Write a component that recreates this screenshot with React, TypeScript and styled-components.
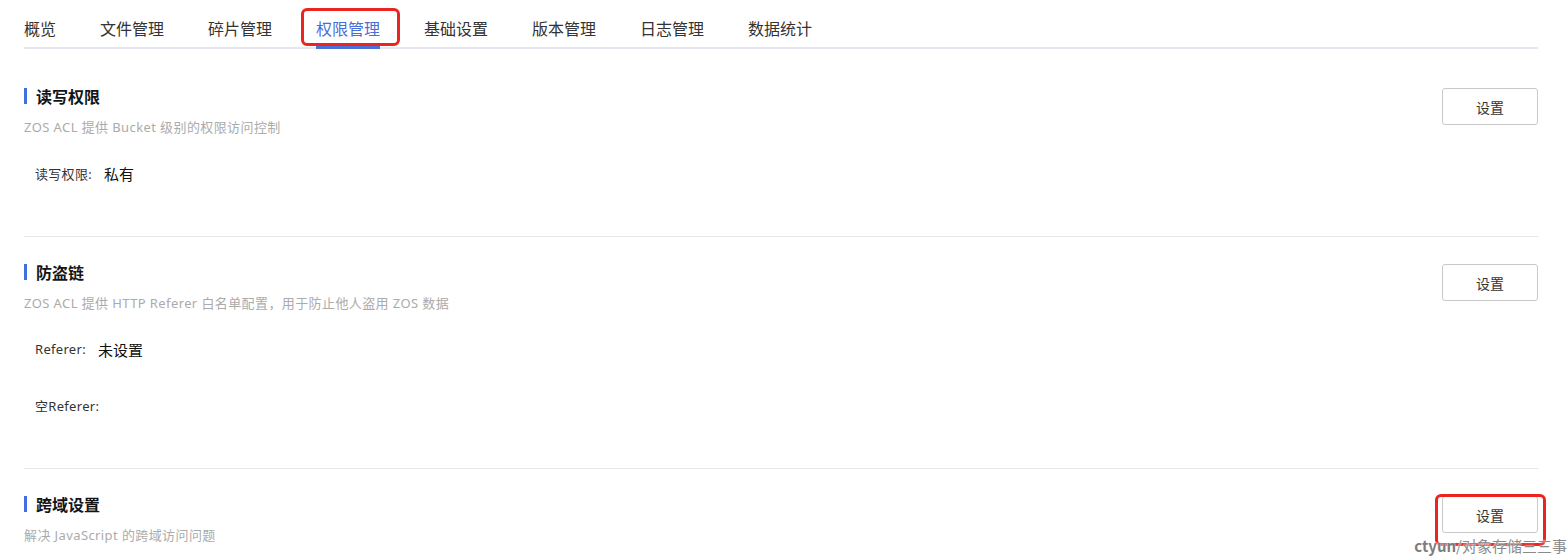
import React from "react";
import styled, { createGlobalStyle } from "styled-components";

const GlobalStyle = createGlobalStyle`
  html, body {
    margin: 0;
    padding: 0;
    background: #ffffff;
    font-family: "Noto Sans", "Noto Sans CJK SC", sans-serif;
    color: #333;
  }
  * { box-sizing: border-box; }
`;

const Page = styled.div`
  position: relative;
  padding: 0 29px 0 24px;
  height: 556px;
  overflow: hidden;
`;

const TabBar = styled.nav`
  display: flex;
  gap: 44px;
  border-bottom: 2px solid #e6e6f1;
`;

const Tab = styled.div<{ $active?: boolean }>`
  position: relative;
  font-family: "Noto Sans CJK SC", sans-serif;
  font-size: 16px;
  line-height: 22px;
  padding: 17px 0 8px;
  color: ${(p) => (p.$active ? "#4a6ed8" : "#333")};
  white-space: nowrap;
  ${(p) =>
    p.$active &&
    `
    &::after {
      content: "";
      position: absolute;
      left: 0;
      right: 0;
      bottom: -2px;
      height: 3px;
      background: #4a6fd6;
    }
  `}
`;

const Highlight = styled.span<{ $l: number; $r: number; $t: number; $b: number }>`
  position: absolute;
  left: ${(p) => p.$l}px;
  right: ${(p) => p.$r}px;
  top: ${(p) => p.$t}px;
  bottom: ${(p) => p.$b}px;
  border: 3px solid #ec2420;
  border-radius: 6px;
  pointer-events: none;
`;

const Section = styled.section<{ $first?: boolean; $last?: boolean }>`
  padding: ${(p) => (p.$first ? "39px" : "27px")} 0 ${(p) => (p.$last ? "0" : "52px")};
  border-bottom: ${(p) => (p.$last ? "none" : "1px solid #e6e6e6")};
`;

const Header = styled.div`
  display: flex;
  justify-content: space-between;
  align-items: flex-start;
`;

const HeadText = styled.div`
  display: flex;
  flex-direction: column;
  margin-top: -1px;
`;

const Title = styled.h3`
  display: flex;
  align-items: center;
  margin: 0;
  font-family: "Noto Sans CJK SC", sans-serif;
  font-size: 16px;
  line-height: 18px;
  font-weight: 700;
  color: #141414;
`;

const Bar = styled.span`
  width: 3px;
  height: 16px;
  background: #416ee0;
  margin-right: 9px;
`;

const Desc = styled.p`
  margin: 12px 0 0;
  font-size: 13px;
  line-height: 20px;
  letter-spacing: 0.4px;
  color: #ababab;
`;

const ButtonWrap = styled.div`
  position: relative;
`;

const Button = styled.button`
  width: 96px;
  height: 37px;
  border: 1px solid #c9c9c9;
  border-radius: 3px;
  background: #fff;
  font-family: "Noto Sans CJK SC", sans-serif;
  font-size: 14px;
  color: #333;
  cursor: pointer;
`;

const Fields = styled.div`
  display: flex;
  flex-direction: column;
  gap: 34px;
  margin-top: 25px;
  padding-left: 11px;
`;

const Field = styled.div`
  display: flex;
  align-items: center;
  height: 22px;
`;

const Label = styled.span`
  font-size: 13px;
  letter-spacing: 0.3px;
  color: #333;
  margin-right: 12px;
`;

const Value = styled.span`
  font-family: "Noto Sans CJK SC", sans-serif;
  font-size: 15px;
  color: #111;
`;

const Watermark = styled.div`
  position: absolute;
  right: 0;
  bottom: 1px;
  font-family: "Noto Sans CJK SC", sans-serif;
  font-size: 15px;
  line-height: 18px;
  color: #8a8a8a;
  white-space: nowrap;
  text-shadow: 0 0 2px #fff, 0 0 2px #fff;
`;

const WmLatin = styled.span`
  font-weight: 700;
  color: #7d7d7d;
`;

const tabs = ["概览", "文件管理", "碎片管理", "权限管理", "基础设置", "版本管理", "日志管理", "数据统计"];

type SectionData = {
  title: string;
  desc: string;
  fields: { label: string; value: string }[];
};

const sections: SectionData[] = [
  {
    title: "读写权限",
    desc: "ZOS ACL 提供 Bucket 级别的权限访问控制",
    fields: [{ label: "读写权限:", value: "私有" }],
  },
  {
    title: "防盗链",
    desc: "ZOS ACL 提供 HTTP Referer 白名单配置，用于防止他人盗用 ZOS 数据",
    fields: [
      { label: "Referer:", value: "未设置" },
      { label: "空Referer:", value: "" },
    ],
  },
  {
    title: "跨域设置",
    desc: "解决 JavaScript 的跨域访问问题",
    fields: [],
  },
];

export default function App() {
  return (
    <>
      <GlobalStyle />
      <Page>
        <TabBar>
          {tabs.map((t) => (
            <Tab key={t} $active={t === "权限管理"}>
              {t}
              {t === "权限管理" && <Highlight $l={-15} $r={-20} $t={8} $b={1} />}
            </Tab>
          ))}
        </TabBar>
        {sections.map((s, i) => (
          <Section key={s.title} $first={i === 0} $last={i === sections.length - 1}>
            <Header>
              <HeadText>
                <Title>
                  <Bar />
                  {s.title}
                </Title>
                <Desc>{s.desc}</Desc>
              </HeadText>
              <ButtonWrap>
                <Button>设置</Button>
                {i === sections.length - 1 && <Highlight $l={-7} $r={-8} $t={-2} $b={-13} />}
              </ButtonWrap>
            </Header>
            {s.fields.length > 0 && (
              <Fields>
                {s.fields.map((f) => (
                  <Field key={f.label}>
                    <Label>{f.label}</Label>
                    {f.value && <Value>{f.value}</Value>}
                  </Field>
                ))}
              </Fields>
            )}
          </Section>
        ))}
        <Watermark>
          <WmLatin>ctyun</WmLatin>/对象存储三三事
        </Watermark>
      </Page>
    </>
  );
}
